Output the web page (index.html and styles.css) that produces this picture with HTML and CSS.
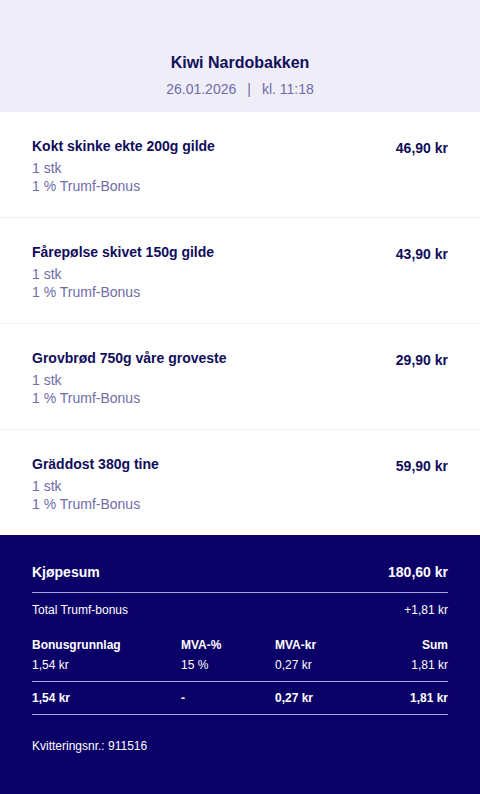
FILE: index.html
```html
<!DOCTYPE html>
<html lang="no">
<head>
    <meta charset="UTF-8">
    <meta name="viewport" content="width=device-width, initial-scale=1.0">
    <title>Kvittering</title>
    <link rel="stylesheet" href="styles.css">
</head>
<body>
    <header class="receipt-header">
        <div class="store-name">Kiwi Nardobakken</div>
        <div class="store-date">
            <span>26.01.2026</span><span class="sep">|</span><span>kl. 11:18</span>
        </div>
    </header>

    <main class="items">
        <div class="item">
            <div class="item-info">
                <div class="item-name">Kokt skinke ekte 200g gilde</div>
                <div class="item-meta">1 stk</div>
                <div class="item-meta">1 % Trumf-Bonus</div>
            </div>
            <div class="item-price">46,90 kr</div>
        </div>
        <div class="item">
            <div class="item-info">
                <div class="item-name">Fårepølse skivet 150g gilde</div>
                <div class="item-meta">1 stk</div>
                <div class="item-meta">1 % Trumf-Bonus</div>
            </div>
            <div class="item-price">43,90 kr</div>
        </div>
        <div class="item">
            <div class="item-info">
                <div class="item-name">Grovbrød 750g våre groveste</div>
                <div class="item-meta">1 stk</div>
                <div class="item-meta">1 % Trumf-Bonus</div>
            </div>
            <div class="item-price">29,90 kr</div>
        </div>
        <div class="item">
            <div class="item-info">
                <div class="item-name">Gräddost 380g tine</div>
                <div class="item-meta">1 stk</div>
                <div class="item-meta">1 % Trumf-Bonus</div>
            </div>
            <div class="item-price">59,90 kr</div>
        </div>
    </main>

    <footer class="summary">
        <div class="total-row">
            <span>Kjøpesum</span>
            <span>180,60 kr</span>
        </div>
        <div class="bonus-row">
            <span>Total Trumf-bonus</span>
            <span>+1,81 kr</span>
        </div>
        <div class="vat-table">
            <div class="vat-row vat-head">
                <span>Bonusgrunnlag</span>
                <span>MVA-%</span>
                <span>MVA-kr</span>
                <span class="right">Sum</span>
            </div>
            <div class="vat-row">
                <span>1,54 kr</span>
                <span>15 %</span>
                <span>0,27 kr</span>
                <span class="right">1,81 kr</span>
            </div>
            <div class="vat-row vat-total">
                <span>1,54 kr</span>
                <span>-</span>
                <span>0,27 kr</span>
                <span class="right">1,81 kr</span>
            </div>
        </div>
        <div class="receipt-no">Kvitteringsnr.: 911516</div>
    </footer>
</body>
</html>
```

FILE: styles.css
```css
body {
    margin: 0;
    padding: 0;
    background-color: #ffffff;
    font-family: 'Liberation Sans', Arial, sans-serif;
    color: #100c5c;
}

.receipt-header {
    background-color: #eeedf8;
    text-align: center;
    padding: 53px 0 14px;
}
.store-name {
    font-size: 16px;
    font-weight: bold;
    line-height: 20px;
    color: #120f5c;
}
.store-date {
    margin-top: 7px;
    font-size: 14px;
    line-height: 18px;
    color: #6f6ca8;
}
.store-date .sep {
    margin: 0 11px;
}

.item {
    display: flex;
    justify-content: space-between;
    padding: 24px 32px 22px;
    border-bottom: 1px solid #f1f1f4;
}
.item:last-child {
    border-bottom: none;
    padding-bottom: 22px;
}
.item-name {
    font-size: 14px;
    font-weight: bold;
    line-height: 20px;
    color: #100c5c;
    margin-bottom: 3px;
}
.item-meta {
    font-size: 14px;
    line-height: 18px;
    color: #6f6ca8;
}
.item-price {
    font-size: 14px;
    font-weight: bold;
    line-height: 20px;
    margin-top: 2px;
    color: #100c5c;
}

.summary {
    background-color: #0b0068;
    color: #ffffff;
    padding: 27px 32px 48px;
}
.total-row {
    display: flex;
    justify-content: space-between;
    font-size: 14px;
    font-weight: bold;
    line-height: 20px;
    padding-bottom: 10px;
    border-bottom: 1px solid #aaa7dd;
}
.bonus-row {
    display: flex;
    justify-content: space-between;
    font-size: 12px;
    line-height: 16px;
    margin-top: 9px;
}
.vat-table {
    margin-top: 19px;
    font-size: 12px;
}
.vat-row {
    display: grid;
    grid-template-columns: 149px 94px 1fr auto;
    line-height: 16px;
}
.vat-head {
    font-weight: bold;
    margin-bottom: 4px;
}
.vat-total {
    font-weight: bold;
    margin-top: 8px;
    padding: 8px 0;
    border-top: 1px solid #aaa7dd;
    border-bottom: 1px solid #aaa7dd;
}
.right {
    text-align: right;
}
.receipt-no {
    margin-top: 23px;
    font-size: 12px;
    line-height: 16px;
}
```
